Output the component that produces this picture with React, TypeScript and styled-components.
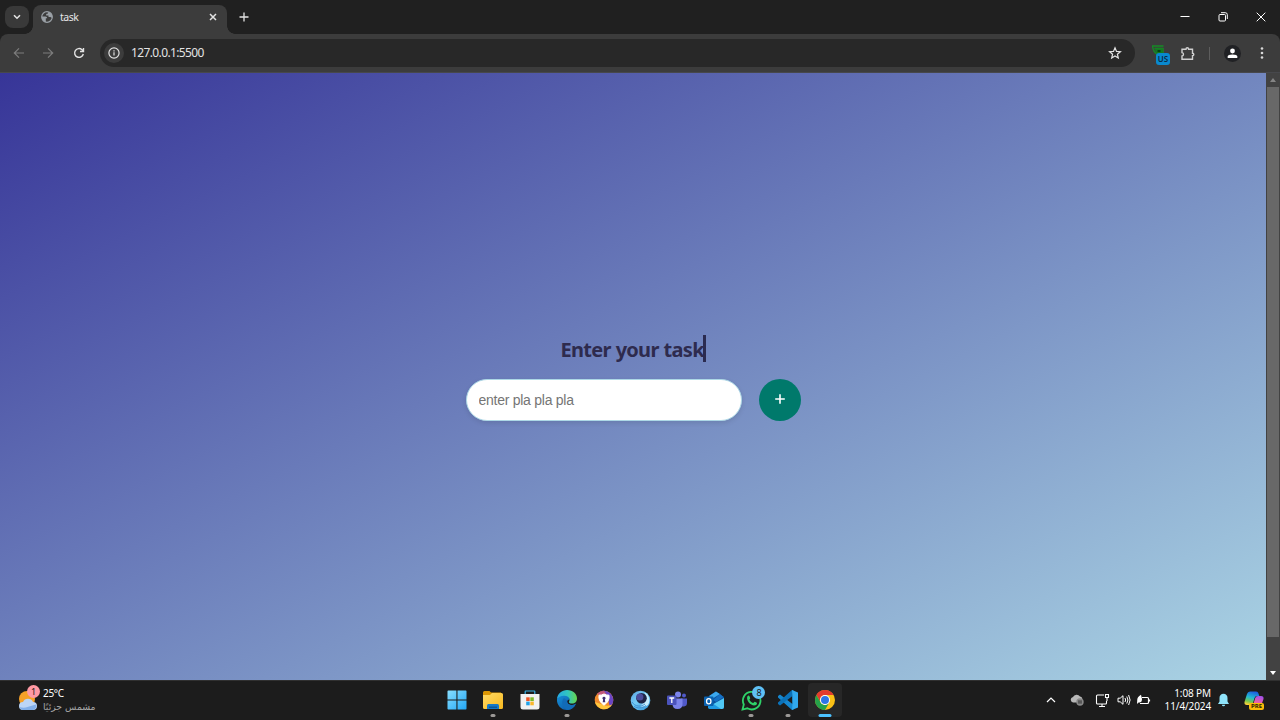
import React from "react";
import styled, { createGlobalStyle, css } from "styled-components";

const ui = `"Noto Sans", "Open Sans", "DejaVu Sans", sans-serif`;

const GlobalStyle = createGlobalStyle`
  * { box-sizing: border-box; }
  body { margin: 0; background: #1c1c1c; overflow: hidden; font-family: ${ui}; }
  svg { display: block; flex: none; }
`;

const Screen = styled.div`
  width: 1280px;
  height: 720px;
  display: flex;
  flex-direction: column;
  overflow: hidden;
`;

/* Browser frame */
const TabStrip = styled.div`
  height: 34px;
  flex: none;
  display: flex;
  align-items: flex-start;
  background: #202020;
  padding-left: 5px;
`;
const TabSearch = styled.div`
  width: 24px;
  height: 22px;
  margin-top: 6px;
  border-radius: 8px;
  background: #393939;
  display: grid;
  place-items: center;
`;
const Tab = styled.div`
  width: 194px;
  height: 29px;
  margin: 5px 0 0 4px;
  padding: 0 8px 5px;
  border-radius: 8px 8px 0 0;
  background: #3c3c3c;
  display: flex;
  align-items: center;
  position: relative;
  &::before,
  &::after {
    content: "";
    position: absolute;
    bottom: 0;
    width: 8px;
    height: 8px;
  }
  &::before {
    left: -8px;
    background: radial-gradient(circle at 0 0, transparent 7.5px, #3c3c3c 8px);
  }
  &::after {
    right: -8px;
    background: radial-gradient(circle at 100% 0, transparent 7.5px, #3c3c3c 8px);
  }
`;
const TabTitle = styled.span`
  flex: 1;
  margin-left: 7px;
  font-size: 10.5px;
  line-height: 14px;
  letter-spacing: -0.5px;
  color: #e6e6e6;
`;
const NewTab = styled.div`
  width: 24px;
  height: 34px;
  margin-left: 5px;
  display: grid;
  place-items: center;
`;
const WindowControls = styled.div`
  display: flex;
  margin-left: auto;
  height: 34px;
`;
const WindowButton = styled.div`
  width: 38px;
  display: grid;
  place-items: center;
`;
const ToolbarBack = styled.div`
  background: #202020;
  flex: none;
`;
const Toolbar = styled.div`
  height: 39px;
  background: #3c3c3c;
  border-radius: 8px 8px 0 0;
  border-bottom: 1px solid #47484c;
  display: flex;
  align-items: center;
  padding-left: 4px;
`;
const ToolButton = styled.div<{ $w?: number }>`
  width: ${(p) => p.$w ?? 30}px;
  height: 28px;
  display: grid;
  place-items: center;
`;
const AddressBar = styled.div`
  width: 1035px;
  height: 28px;
  margin-left: 6px;
  border-radius: 14px;
  background: #282828;
  display: flex;
  align-items: center;
  padding: 0 13px 0 4px;
`;
const SiteInfo = styled.div`
  width: 20px;
  height: 20px;
  border-radius: 50%;
  background: #3c3c3c;
  display: grid;
  place-items: center;
`;
const Url = styled.span`
  flex: 1;
  margin-left: 7px;
  font-size: 12px;
  line-height: 16px;
  letter-spacing: -0.62px;
  color: #e3e3e3;
`;
const ExtensionIcon = styled.div`
  width: 20px;
  height: 22px;
  margin-left: 15px;
  position: relative;
`;
const LocaleBadge = styled.span`
  position: absolute;
  left: 6px;
  top: 11px;
  width: 14px;
  height: 12px;
  border-radius: 3px;
  background: #0989cf;
  color: #0b2a44;
  font: 600 8px/12px ${ui};
  text-align: center;
`;
const Divider = styled.div`
  width: 1px;
  height: 13px;
  margin: 0 7px 0 5px;
  background: #5d5d5d;
`;
const Avatar = styled.div`
  width: 17px;
  height: 17px;
  border-radius: 50%;
  background: #202124;
  display: grid;
  place-items: center;
`;

/* Page */
const Viewport = styled.div`
  flex: 1;
  display: flex;
  min-height: 0;
`;
const Page = styled.main`
  flex: 1;
  background: linear-gradient(to bottom right, #373598, #add8e6) 0 0 / 100% 640px no-repeat;
  display: flex;
  flex-direction: column;
  align-items: center;
  padding-top: 262px;
`;
const Title = styled.h1`
  margin: 0;
  height: 27px;
  border-right: 3px solid #2b2b50;
  font: bold 20px/29px ${ui};
  color: #2e2b4e;
  white-space: nowrap;
  width: 145px;
  letter-spacing: -0.72px;
  word-spacing: 0.5px;
`;
const TaskForm = styled.div`
  display: flex;
  gap: 17px;
  margin-top: 17px;
`;
const TaskInput = styled.input`
  width: 276px;
  height: 42px;
  border: 1px solid #add8e6;
  border-radius: 21px;
  padding: 0 12px;
  background: #fff;
  font: 14px "Liberation Sans", sans-serif;
  letter-spacing: -0.26px;
  box-shadow: 0 2px 5px rgba(0, 0, 0, 0.1);
  &::placeholder { color: #757575; opacity: 1; }
`;
const AddButton = styled.button`
  width: 42px;
  height: 42px;
  border: 0;
  border-radius: 50%;
  padding: 0 0 2px;
  background: #00796b;
  display: grid;
  place-items: center;
`;
const Scrollbar = styled.div`
  width: 14px;
  background: #424242;
  display: flex;
  flex-direction: column;
  align-items: center;
`;
const ScrollArrow = styled.div`
  height: 14px;
  width: 14px;
  display: grid;
  place-items: center;
`;
const ScrollThumb = styled.div`
  width: 12px;
  height: 550px;
  margin-bottom: auto;
  background: #686868;
`;

/* Taskbar */
const Taskbar = styled.footer`
  height: 40px;
  flex: none;
  background: #1c1c1c;
  border-top: 1px solid #303030;
  display: flex;
  color: #fff;
`;
const Weather = styled.div`
  width: 438.300px;
  display: flex;
  padding: 4px 0 0 18px;
`;
const WeatherIcon = styled.div`
  width: 22px;
  height: 28px;
  position: relative;
`;
const Count = styled.span<{ $blue?: boolean }>`
  position: absolute;
  width: 13px;
  height: 13px;
  border-radius: 50%;
  text-align: center;
  font: 9px/13px ${ui};
  color: #1a1a1a;
  ${(p) =>
    p.$blue
      ? css`right: 4px; top: 5px; background: #5fc0f5;`
      : css`right: 0; top: 0; background: #ff99a4;`}
`;
const WeatherText = styled.div`
  margin-left: 3px;
  padding-top: 1px;
  display: flex;
  flex-direction: column;
`;
const Temperature = styled.span`
  font-size: 10px;
  line-height: 15px;
  letter-spacing: -0.3px;
`;
const Condition = styled.span`
  font: 9.300px/12px "DejaVu Sans", sans-serif;
  color: #a9a9a9;
`;
const Apps = styled.div`
  display: flex;
`;
const AppSlot = styled.div<{ $active?: boolean }>`
  width: 36.8px;
  height: 38px;
  position: relative;
  display: grid;
  place-items: center;
  ${(p) =>
    p.$active &&
    css`
      &::before {
        content: "";
        position: absolute;
        inset: 2px 1px 2px 2px;
        border-radius: 4px;
        background: #272727;
      }
    `}
  svg { position: relative; }
`;
const Running = styled.i<{ $active?: boolean }>`
  position: absolute;
  bottom: 2px;
  left: 50%;
  width: ${(p) => (p.$active ? 13 : 5)}px;
  height: 3px;
  transform: translateX(-50%);
  border-radius: 2px;
  background: ${(p) => (p.$active ? "#4cc2ff" : "#9b9896")};
`;
const Tray = styled.div`
  margin-left: auto;
  padding-right: 7px;
  display: flex;
`;
const TrayItem = styled.div<{ $w: number }>`
  width: ${(p) => p.$w}px;
  height: 38px;
  display: grid;
  place-items: center;
`;
const Clock = styled.div`
  width: 57px;
  padding-top: 6px;
  text-align: right;
  font-size: 10px;
  line-height: 13px;
  letter-spacing: -0.12px;
  white-space: nowrap;
`;
const Copilot = styled.div`
  width: 38px;
  position: relative;
  display: flex;
  justify-content: center;
  padding-top: 10px;
`;
const PreTag = styled.span`
  position: absolute;
  left: 14px;
  top: 22px;
  width: 15px;
  height: 7px;
  border-radius: 2px;
  background: #fbbc09;
  color: #2a2000;
  font: bold 6px/7px ${ui};
  text-align: center;
`;

type StrokeProps = { d: string; w?: number; h?: number; c?: string; s?: number };
const Stroke = ({ d, w = 12, h = 12, c = "#e3e3e3", s = 1.4 }: StrokeProps) => (
  <svg width={w} height={h} viewBox={`0 0 ${w} ${h}`} fill="none" stroke={c} strokeWidth={s}>
    <path d={d} />
  </svg>
);

const WindowsIcon = () => (
  <svg width="20" height="20" viewBox="0 0 20 20">
    <defs>
      <linearGradient id="win" gradientUnits="userSpaceOnUse" x1="0" y1="0" x2="20" y2="20">
        <stop stopColor="#8be0ff" /><stop offset="1" stopColor="#1fa5f5" />
      </linearGradient>
    </defs>
    <path fill="url(#win)" d="M.5 1.200q0-.7.7-.7h8.200v8.900H.5zM10.500.5h8.300q.7 0 .7.7v8.200h-9zM.5 10.500h8.900v9H1.200q-.7 0-.7-.7zM10.500 10.500h9v8.300q0 .7-.7.7h-8.300z" />
  </svg>
);
const ExplorerIcon = () => (
  <svg width="22" height="20" viewBox="0 0 22 20">
    <defs>
      <linearGradient id="fold" x1="0" y1="0" x2="1" y2="1">
        <stop stopColor="#ffda66" /><stop offset="1" stopColor="#f8b91f" />
      </linearGradient>
    </defs>
    <path fill="#dd9703" d="M1 2.500Q1 1 2.500 1h5l1.500 1.500H19v6H1z" />
    <path fill="url(#fold)" d="M1 5h7l2-2h9.500Q21 3 21 4.500v13q0 1.500-1.500 1.500h-17Q1 19 1 17.500z" />
    <path fill="#1578c8" d="M5 15.500Q5 14 6.500 14h9q1.500 0 1.500 1.500V19H5z" />
    <path fill="#0c5696" d="M7 16.500h8V18H7z" />
  </svg>
);
const StoreIcon = () => (
  <svg width="20" height="20" viewBox="0 0 20 20">
    <path fill="none" stroke="#38b0e4" strokeWidth="1.200" d="M5.200 5V1.500Q5.200 1 5.700 1h8.600q.5 0 .5.5V5" />
    <path fill="#f1f1f1" d="M.5 4h19v13q0 2.500-2.500 2.500H3Q.5 19.500.5 17z" />
    <path fill="#ef5424" d="M6.200 7.300h3.500v3.700H6.200z" /><path fill="#7db928" d="M10.300 7.300h3.500v3.700h-3.500z" />
    <path fill="#20a1e8" d="M6.200 11.600h3.500v3.700H6.200z" /><path fill="#fbb62a" d="M10.300 11.600h3.500v3.700h-3.500z" />
  </svg>
);
const EdgeIcon = () => (
  <svg width="22" height="22" viewBox="0 0 22 22">
    <defs>
      <linearGradient id="edgeTop" x1="0" x2="1">
        <stop stopColor="#24a9e6" /><stop offset=".55" stopColor="#32c6bd" /><stop offset="1" stopColor="#67d64a" />
      </linearGradient>
      <linearGradient id="edgeBot" x1="0" y1="0" x2="1" y2="1">
        <stop stopColor="#1692da" /><stop offset="1" stopColor="#0c4e9c" />
      </linearGradient>
    </defs>
    <path fill="url(#edgeBot)" d="M1 10c1-3 4-4.500 7-4.500 4 0 6 3 5.500 5-3 0-3.500 5 1.500 5.500 2 .2 3.800-.5 5-1.500C18 19 14.500 21 11 21 5 21 .5 16 1 10z" />
    <path fill="#126bb7" d="M8 9c-3 3-2 9 2.500 11.800 4 .5 7.500-1.500 9.500-6-4 2.700-9.500.7-9-3.300z" />
    <path fill="url(#edgeTop)" d="M1 10C1.500 4.500 6 1 11 1c6 0 10 4 10 8.500 0 3-2 5-5 5-2 0-3.500-.8-3-1.800 1.300-2 .5-5.700-4.500-5.900C5 6.600 2.300 8 1 10z" />
  </svg>
);
const ShieldBrowserIcon = () => (
  <svg width="20" height="20" viewBox="0 0 20 20">
    <circle cx="10" cy="10" r="9.300" fill="#f08a2c" />
    <path d="M7 1.200C13-.8 19.300 4 19.300 10c0 3-1.500 5.500-3.500 7L14 9z" fill="#6a45c4" />
    <path d="M3 4C5 1.500 8 .7 10 .7l3 4-6 1z" fill="#c2597a" />
    <path d="M1 12c1.500 5 5.500 7.300 9 7.300 3.500 0 6.500-2 8-4.800-3 1.500-6 1.500-8 .5z" fill="#ffc63d" />
    <path d="M10 4q2.500 1.300 5 1.200 1 6-5 10-6-4-5-10Q7.500 5.300 10 4z" fill="#fff" stroke="#fff" />
    <path d="M10 6.700a1.600 1.600 0 01.9 2.900l.4 2.700H8.700l.4-2.700a1.600 1.600 0 01.9-2.900z" fill="#3d2f72" />
  </svg>
);
const OrbIcon = () => (
  <svg width="21" height="21" viewBox="0 0 21 21">
    <defs>
      <linearGradient id="orb" x1="0" y1="0" x2=".8" y2="1">
        <stop stopColor="#5b9fe0" /><stop offset=".5" stopColor="#74cdf5" /><stop offset="1" stopColor="#3a9bdc" />
      </linearGradient>
    </defs>
    <circle cx="10.500" cy="10.500" r="9.800" fill="url(#orb)" />
    <path d="M15 2.500a9 9 0 013 12.500q-4 3-8 1 6-3 5-13.500z" fill="#c4edfd" />
    <circle cx="11.500" cy="8.300" r="5.300" fill="#1e2545" />
    <circle cx="9.800" cy="7" r="3.600" fill="#4a4c9c" />
    <path d="M2 12c3 5 9 5 13 2M4 16.500c4 2 8 2 12-1" stroke="#3f91d2" fill="none" />
  </svg>
);
const TeamsIcon = () => (
  <svg width="20" height="18" viewBox="0 0 20 18">
    <circle cx="17" cy="4.500" r="2" fill="#5059c9" /><circle cx="11" cy="3.500" r="3" fill="#7b83eb" />
    <path d="M14 7.500h6V12q0 3-3 3.500h-3z" fill="#5059c9" />
    <path d="M6 7.500h9.500V13q0 5-5 5T5.500 13z" fill="#7b83eb" />
    <rect y="4.500" width="9.500" height="9.500" rx="1" fill="#4b53bc" />
    <path d="M2.400 7h4.800M4.800 7v5" stroke="#fff" strokeWidth="1.300" />
  </svg>
);
const OutlookIcon = () => (
  <svg width="20" height="19" viewBox="0 0 20 19">
    <path d="M4 6L11.500.5 20 6v10q0 2-2 2H6q-2 0-2-2z" fill="#0c4f9b" />
    <path d="M5 5l7-4.500L16 3 8 8z" fill="#3ba9ee" /><path d="M9 9l7-6 3.500 3L12 11z" fill="#1470c4" />
    <path d="M4 16L20 7v9q0 2-2 2H6z" fill="#50c8f5" /><path d="M5 10l12 8H6q-2 0-2-2z" fill="#1e99e3" />
    <rect y="5.500" width="9.500" height="9.500" rx="1" fill="#0b62b0" />
    <ellipse cx="4.750" cy="10.200" rx="2.200" ry="2.600" fill="none" stroke="#fff" strokeWidth="1.300" />
  </svg>
);
const WhatsAppIcon = () => (
  <svg width="21" height="21" viewBox="0 0 21 21">
    <path d="M1.500 19.500l1.300-5A8.800 8.800 0 116.400 18.300z" fill="none" stroke="#2ed168" strokeWidth="1.800" />
    <path d="M6.300 6.500c.8-1.200 1.800-1.200 2.200-.2l.7 1.700c.2.500-.8 1.300-.8 1.700.8 1.600 2 2.700 3.700 3.300.6-.1 1.200-1.500 1.700-1.300l2 1c.6.500-.2 2.300-1.500 2.600-4 1-9.500-4.500-8-8.800z" fill="#2ed168" />
  </svg>
);
const CodeIcon = () => (
  <svg width="20" height="20" viewBox="0 0 20 20">
    <path d="M14 0l2 1v18l-2 1L0 7.500 0 6l2-1.500L14.500 14z" fill="#1687cf" />
    <path d="M14 0L0 12.500V14l2 1.500L14.500 6z" fill="#0b72b9" />
    <path d="M14 0l6 2.500v15L14 20l.5-6V6z" fill="#31a9ee" />
  </svg>
);
const ChromeIcon = () => (
  <svg width="20" height="20" viewBox="0 0 20 20">
    <circle cx="10" cy="10" r="10" fill="#fbc116" />
    <path d="M1.340 5A10 10 0 0118.660 5H10a5 5 0 00-4.330 7.500z" fill="#e33b2e" />
    <path d="M1.340 5A10 10 0 0010 20l4.330-7.500a5 5 0 01-8.660 0z" fill="#25a14a" />
    <circle cx="10" cy="10" r="5" fill="#fff" /><circle cx="10" cy="10" r="4" fill="#2d75e6" />
  </svg>
);

const apps = [
  { Icon: WindowsIcon }, { Icon: ExplorerIcon, run: true }, { Icon: StoreIcon },
  { Icon: EdgeIcon, run: true }, { Icon: ShieldBrowserIcon }, { Icon: OrbIcon },
  { Icon: TeamsIcon }, { Icon: OutlookIcon }, { Icon: WhatsAppIcon, run: true, count: 8 },
  { Icon: CodeIcon, run: true }, { Icon: ChromeIcon, run: true, active: true },
];

export default function App() {
  return (
    <Screen>
      <GlobalStyle />
      <TabStrip>
        <TabSearch><Stroke w={8} h={6} d="M1 1.200l3 3 3-3" s={1.600} /></TabSearch>
        <Tab>
          <svg width="12" height="12" viewBox="0 0 12 12">
            <circle cx="6" cy="6" r="5.300" fill="#3c3c3c" stroke="#9aa0a6" strokeWidth="1.200" />
            <path fill="#9aa0a6" d="M.8 5.500h3.700q1.700.2 1.700 1.800H4.800v3.900Q.8 10 .8 5.500zM6.800 1l.2 1.600-1.800.3v1.500H7.500v1.700h1.800L11.300 7Q11.800 1 6.800 1z" />
          </svg>
          <TabTitle>task</TabTitle>
          <Stroke w={12} h={12} d="M3 3l6 6M9 3L3 9" s={1.500} />
        </Tab>
        <NewTab><Stroke w={10} h={10} d="M5 .5v9M.5 5h9" s={1.300} /></NewTab>
        <WindowControls>
          <WindowButton><Stroke w={10} h={10} d="M.5 4.500h9" s={1} c="#fff" /></WindowButton>
          <WindowButton><Stroke w={10} h={10} d="M2 2.500h4.500q1 0 1 1V8q0 1-1 1H2Q1 9 1 8V3.500q0-1 1-1zM3 .7h4.300Q9.300.7 9.300 2.700V7" s={1} c="#fff" /></WindowButton>
          <WindowButton><Stroke w={10} h={10} d="M.7.7l8.600 8.600M9.300.7L.7 9.300" s={1} c="#fff" /></WindowButton>
        </WindowControls>
      </TabStrip>
      <ToolbarBack>
        <Toolbar>
          <ToolButton $w={29}><Stroke d="M11 6H1.500M6 1.300L1.300 6 6 10.700" c="#7d7d7d" s={1.200} /></ToolButton>
          <ToolButton><Stroke d="M1 6h9.500M6 1.300L10.700 6 6 10.700" c="#7d7d7d" s={1.200} /></ToolButton>
          <ToolButton $w={31}><Stroke d="M10.300 7A4.400 4.400 0 119 2.700L10.400 4M10.500 1v3.500H7" s={1.400} /></ToolButton>
          <AddressBar>
            <SiteInfo>
              <Stroke d="M6 .9a5.100 5.100 0 100 10.200A5.100 5.100 0 006 .9zM6 5.300v3.300M6 3.200v1.200" s={1.200} />
            </SiteInfo>
            <Url>127.0.0.1:5500</Url>
            <Stroke w={14} h={14} d="M7 1.800l1.500 3.600 3.900.3-3 2.500.9 3.800L7 10l-3.300 2 .9-3.800-3-2.500 3.900-.3z" s={1.200} />
          </AddressBar>
          <ExtensionIcon>
            <svg width="16" height="16" viewBox="0 0 16 16">
              <path d="M2 4h11.500M2.500 4Q3 10 8 13M4.500 6.500h8.500V11" fill="none" stroke="#168a26" strokeWidth="1.400" />
              <path d="M5 6.500h8V12H8.500Q5 11 5 6.500z" fill="#137a20" />
              <path d="M7.500 8h3v2h-3z" fill="#07420e" />
            </svg>
            <LocaleBadge>US</LocaleBadge>
          </ExtensionIcon>
          <ToolButton $w={34}>
            <Stroke w={15} h={15} d="M2 3.200h4Q6 1.700 7.300 1.700t1.300 1.500H12.500v4q1.300 0 1.300 1.200t-1.300 1.200v3.600H2V10q1.500-.2 1.500-1.700T2 6.600z" s={1.400} c="#d0d0d0" />
          </ToolButton>
          <Divider />
          <ToolButton $w={30}>
            <Avatar>
              <svg width="11" height="11" viewBox="0 0 11 11" fill="#fff">
                <circle cx="5.500" cy="3" r="2.400" /><path d="M.7 10V8.500Q.7 6.500 5.500 6.500t4.800 2V10z" />
              </svg>
            </Avatar>
          </ToolButton>
          <ToolButton>
            <svg width="4" height="12" viewBox="0 0 4 12" fill="#d8d8d8">
              <circle cx="2" cy="1.500" r="1.300" /><circle cx="2" cy="6" r="1.300" /><circle cx="2" cy="10.500" r="1.300" />
            </svg>
          </ToolButton>
        </Toolbar>
      </ToolbarBack>

      <Viewport>
        <Page>
          <Title>Enter your task</Title>
          <TaskForm>
            <TaskInput placeholder="enter pla pla pla" />
            <AddButton aria-label="Add"><Stroke w={12} h={12} d="M6 1.200v9.600M1.200 6h9.600" s={1.600} c="#fff" /></AddButton>
          </TaskForm>
        </Page>
        <Scrollbar>
          <ScrollArrow><svg width="6" height="4"><path d="M0 4l3-4 3 4z" fill="#858585" /></svg></ScrollArrow>
          <ScrollThumb />
          <ScrollArrow><svg width="6" height="4"><path d="M0 0l3 4 3-4z" fill="#fff" /></svg></ScrollArrow>
        </Scrollbar>
      </Viewport>

      <Taskbar>
        <Weather>
          <WeatherIcon>
            <svg width="22" height="28" viewBox="0 0 22 28">
              <circle cx="9" cy="14" r="8" fill="#f6a127" />
              <path d="M5 25a4 4 0 010-8 5.500 5.500 0 0110 0 4 4 0 010 8z" fill="#bcd5f6" />
              <path d="M1.500 22q4 1.500 8 0t8.500-2.500a4 4 0 01-3 5.500H5q-2.500 0-3.500-3z" fill="#82afe9" />
            </svg>
            <Count>1</Count>
          </WeatherIcon>
          <WeatherText>
            <Temperature>25°C</Temperature>
            <Condition dir="rtl">مشمس جزئيًا</Condition>
          </WeatherText>
        </Weather>
        <Apps>
          {apps.map(({ Icon, run, active, count }, i) => (
            <AppSlot key={i} $active={active}>
              <Icon />
              {run && <Running $active={active} />}
              {count && <Count $blue>{count}</Count>}
            </AppSlot>
          ))}
        </Apps>
        <Tray>
          <TrayItem $w={25}><Stroke w={10} h={6} d="M1 5l4-4 4 4" s={1.200} c="#fff" /></TrayItem>
          <TrayItem $w={28}>
            <svg width="14" height="12" viewBox="0 0 14 12">
              <path d="M3 8.500A2.800 2.800 0 013 3a4 4 0 017-.5 3 3 0 012 4V8.500z" fill="#b8b8b8" />
              <circle cx="10" cy="8" r="3.700" fill="#888" /><path d="M9 6.300v3.400M11 6.300v3.400" stroke="#292929" />
            </svg>
          </TrayItem>
          <TrayItem $w={23}><Stroke w={15} h={15} d="M9 2H2.500Q1.500 2 1.500 3v7q0 1 1 1h8q1 0 1-1V8M4 13.500h6M7 11v2.500M10.500 1.500h3v3h-3zM12 4.500V8" s={1.100} c="#fff" /></TrayItem>
          <TrayItem $w={19}><Stroke w={14} h={12} d="M1 4.200h2.200L6 1.700v8.600L3.200 7.800H1zM8 4q1.300 2 0 4M9.800 2.500q2.200 3.500 0 7M11.600 1q3 5 0 10" s={1} c="#fff" /></TrayItem>
          <TrayItem $w={21}>
            <svg width="15" height="13" viewBox="0 0 15 13">
              <path d="M6 3.500h5.500q1 0 1 1v4q0 1-1 1H4M13.500 5.500v2" fill="none" stroke="#fff" strokeWidth="1.200" />
              <path d="M5 .8Q1 3 1.200 6.500L1 10l1.500-1.500Q6 9 6 5z" fill="#fff" />
            </svg>
          </TrayItem>
          <Clock>1:08 PM<br />11/4/2024</Clock>
          <TrayItem $w={24}>
            <svg width="13" height="14" viewBox="0 0 13 14" fill="#8fe3fa">
              <path d="M6.500.8A4 4 0 0110.500 5v3.500L12 11H1l1.500-2.500V5a4 4 0 014-4.200zM4.800 11.700h3.400q-.3 1.500-1.700 1.500t-1.700-1.500z" />
            </svg>
          </TrayItem>
          <Copilot>
            <svg width="20" height="18" viewBox="0 0 20 18">
              <defs>
                <linearGradient id="copL" x1=".6" y1="0" x2=".3" y2="1">
                  <stop stopColor="#1b5ee0" /><stop offset=".45" stopColor="#22b9d4" /><stop offset=".75" stopColor="#75c84c" /><stop offset="1" stopColor="#ffd13b" />
                </linearGradient>
                <linearGradient id="copR" x1=".6" y1="0" x2=".3" y2="1">
                  <stop stopColor="#a550e8" /><stop offset=".5" stopColor="#f060a4" /><stop offset="1" stopColor="#ff8a3c" />
                </linearGradient>
              </defs>
              <path d="M6 .5h6q2 0 2.500 2l.8 2.500h-2Q11 5 10.500 7L9 12q-.5 2-3 2H3Q0 14 .5 11L3 3Q3.700.5 6 .5z" fill="url(#copL)" />
              <path d="M14 5h3q3 0 2.500 3L17 15q-.7 2.500-3 2.500H8Q6 17.500 5.500 16L5 14h2q2 0 2.700-2l1.500-5Q12 5 14 5z" fill="url(#copR)" />
            </svg>
            <PreTag>PRE</PreTag>
          </Copilot>
        </Tray>
      </Taskbar>
    </Screen>
  );
}
